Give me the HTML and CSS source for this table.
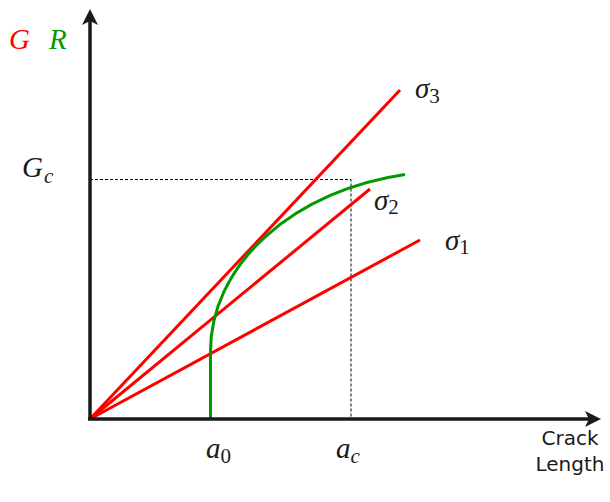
FILE: index.html
```html
<!DOCTYPE html>
<html>
<head>
<meta charset="utf-8">
<link rel="stylesheet" href="styles.css">
</head>
<body>
<svg class="chart" width="610" height="502" viewBox="0 0 610 502" xmlns="http://www.w3.org/2000/svg">
  <!-- dashed guides -->
  <path class="guide" d="M90 179.5 H351 V419"/>
  <!-- red G lines -->
  <line class="g-line" x1="90" y1="419" x2="400" y2="90"/>
  <line class="g-line" x1="90" y1="419" x2="370" y2="189"/>
  <line class="g-line" x1="90" y1="419" x2="420" y2="240"/>
  <!-- green R curve -->
  <path class="r-curve" d="M210.5 419 V351 A240 180 0 0 1 405 174.5"/>
  <!-- axes -->
  <line class="axis" x1="90" y1="419" x2="90" y2="20"/>
  <line class="axis" x1="88" y1="419" x2="590" y2="419"/>
  <path class="arrow" d="M90 9 L98 25 L90 21 L82 25 Z"/>
  <path class="arrow" d="M601 419 L585 427 L589 419 L585 411 Z"/>
  <!-- labels -->
  <text class="math red" x="9" y="49">G</text>
  <text class="math green" x="49" y="49">R</text>
  <text class="math" x="22" y="177">G<tspan class="sub" dx="1" dy="6">c</tspan></text>
  <text class="math" x="415" y="98">σ<tspan class="sub num" dy="5">3</tspan></text>
  <text class="math" x="374" y="210">σ<tspan class="sub num" dy="4">2</tspan></text>
  <text class="math" x="445" y="250">σ<tspan class="sub num" dy="4">1</tspan></text>
  <text class="math" x="206" y="458">a<tspan class="sub num" dy="5">0</tspan></text>
  <text class="math" x="336" y="458">a<tspan class="sub" dy="5">c</tspan></text>
  <text class="hand" x="570" y="445">Crack</text>
  <text class="hand" x="570" y="471">Length</text>
</svg>
</body>
</html>
```
FILE: styles.css
```css
html, body {
  margin: 0;
  padding: 0;
  background: #ffffff;
}
.chart {
  display: block;
}
.guide {
  fill: none;
  stroke: #000000;
  stroke-width: 1;
  stroke-dasharray: 3 2;
}
.g-line {
  stroke: #ff0000;
  stroke-width: 3;
  stroke-linecap: butt;
}
.r-curve {
  fill: none;
  stroke: #009900;
  stroke-width: 3;
}
.axis {
  stroke: #1a1a1a;
  stroke-width: 3.5;
}
.arrow {
  fill: #1a1a1a;
}
.math {
  font-family: "Liberation Serif", "DejaVu Serif", serif;
  font-style: italic;
  font-size: 29px;
  fill: #1a1a1a;
}
.math .sub {
  font-size: 21px;
}
.math .num {
  font-style: normal;
}
.red {
  fill: #ff0000;
}
.green {
  fill: #009900;
}
.hand {
  font-family: "DejaVu Sans", sans-serif;
  font-size: 20px;
  fill: #1a1a1a;
  text-anchor: middle;
}
```
